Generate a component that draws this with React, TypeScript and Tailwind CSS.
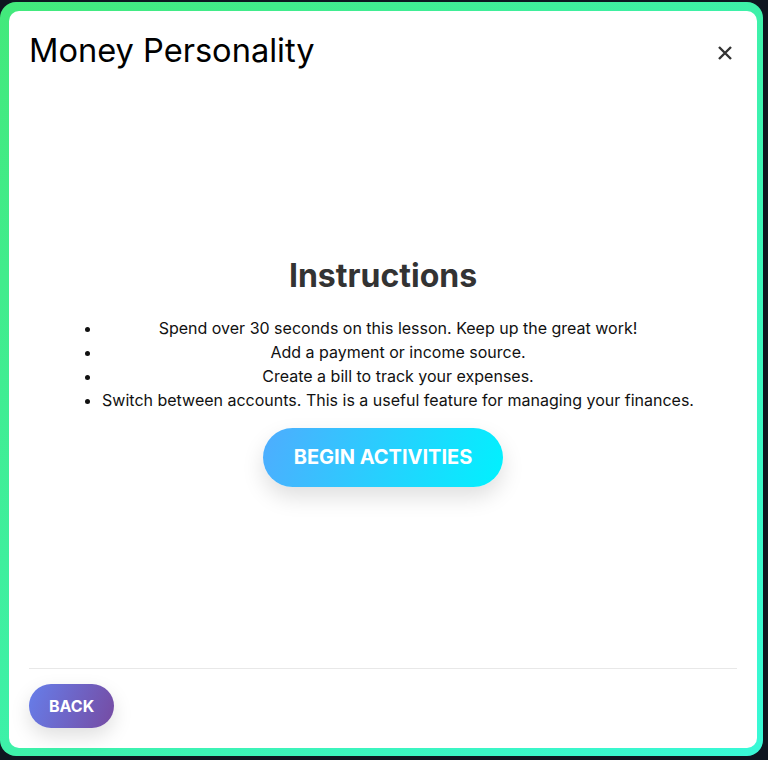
import React from "react";

export default function App() {
  return (
    <div
      className="w-[768px] h-[760px] bg-[#0e1620] pt-[2px]"
      style={{ fontFamily: "Inter, 'Noto Sans', sans-serif" }}
    >
      <div className="w-[763px] h-[754px] rounded-[16px] bg-[linear-gradient(135deg,#43e97b_0%,#38f9d7_100%)] pt-[9px] pl-[9px] pr-[6px] pb-[8px]">
        <div className="w-full h-full bg-white rounded-[10px] flex flex-col px-5 pt-[20px] pb-5">
          <div className="flex items-start justify-between">
            <h2 className="text-[32.6px] leading-[1.2] text-black font-normal">Money Personality</h2>
            <button className="mt-[14px] mr-1 w-4 h-4 flex items-center justify-center text-[#333]">
              <svg width="16" height="16" viewBox="0 0 16 16" fill="none">
                <path d="M2 2L14 14M14 2L2 14" stroke="currentColor" strokeWidth="2.4" strokeLinecap="butt" />
              </svg>
            </button>
          </div>
          <div className="flex-1 flex flex-col items-center justify-center pt-[6px]">
            <h3 className="text-[32px] leading-[1.2] font-bold text-[#333]">Instructions</h3>
            <ul className="mt-5 list-disc pl-10 text-center text-[16px] leading-6 text-[#111] w-fit mr-[10px]">
              <li>Spend over 30 seconds on this lesson. Keep up the great work!</li>
              <li>Add a payment or income source.</li>
              <li>Create a bill to track your expenses.</li>
              <li>Switch between accounts. This is a useful feature for managing your finances.</li>
            </ul>
            <button className="mt-4 h-[59px] px-[31px] rounded-full bg-[linear-gradient(110deg,#4facfe_0%,#00f2fe_100%)] text-white font-bold text-[20px] shadow-[0_10px_22px_rgba(0,0,0,0.13)]">
              BEGIN ACTIVITIES
            </button>
          </div>
          <div className="border-t border-[#e8e8e8] pt-[15px]">
            <button className="h-11 px-5 rounded-full bg-[linear-gradient(110deg,#667eea_0%,#764ba2_100%)] text-white font-bold text-[16px] shadow-[0_8px_20px_rgba(0,0,0,0.13)]">
              BACK
            </button>
          </div>
        </div>
      </div>
    </div>
  );
}
